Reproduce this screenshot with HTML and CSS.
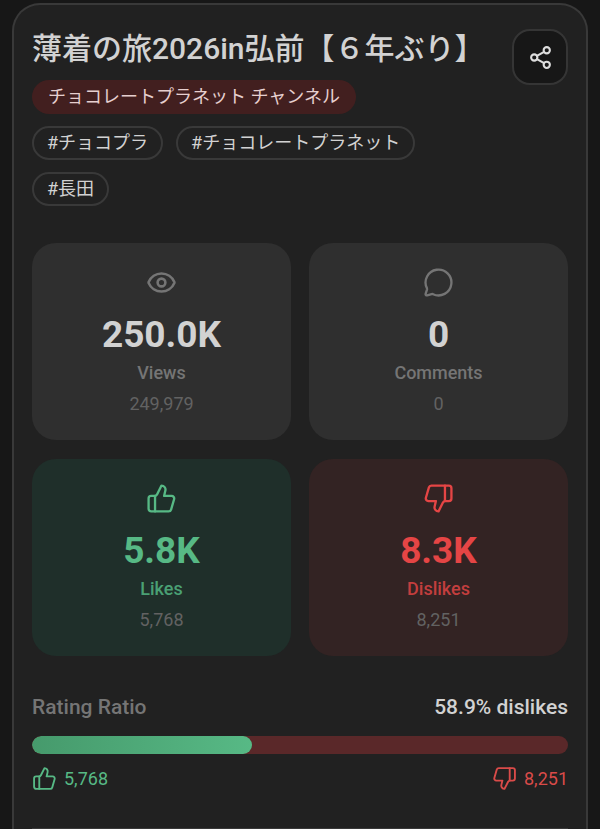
FILE: index.html
```html
<!DOCTYPE html>
<html lang="ja">
<head>
    <meta charset="UTF-8">
    <meta name="viewport" content="width=device-width, initial-scale=1.0">
    <title>薄着の旅2026in弘前【６年ぶり】</title>
    <link rel="stylesheet" href="styles.css">
</head>
<body>
    <!-- shared icons -->
    <svg class="sprite" aria-hidden="true">
        <symbol id="thumb-up" viewBox="0 0 24 24">
            <path d="M7 10v12"/>
            <path d="M15 5.88 14 10h5.83a2 2 0 0 1 1.92 2.56l-2.33 8A2 2 0 0 1 17.5 22H4a2 2 0 0 1-2-2v-8a2 2 0 0 1 2-2h2.76a2 2 0 0 0 1.79-1.11L12 2a3.13 3.13 0 0 1 3 3.88Z"/>
        </symbol>
        <symbol id="thumb-down" viewBox="0 0 24 24">
            <path d="M17 14V2"/>
            <path d="M9 18.12 10 14H4.17a2 2 0 0 1-1.92-2.56l2.33-8A2 2 0 0 1 6.5 2H20a2 2 0 0 1 2 2v8a2 2 0 0 1-2 2h-2.76a2 2 0 0 0-1.79 1.11L12 22a3.13 3.13 0 0 1-3-3.88Z"/>
        </symbol>
    </svg>

    <main class="card">
        <header class="header">
            <div class="info">
                <h1 class="title">薄着の旅2026in弘前【６年ぶり】</h1>
                <a class="channel" href="#">チョコレートプラネット チャンネル</a>
                <div class="tags">
                    <span class="tag">#チョコプラ</span>
                    <span class="tag">#チョコレートプラネット</span>
                    <span class="tag">#長田</span>
                </div>
            </div>
            <button class="share" type="button" aria-label="Share">
                <svg class="icon share-icon" viewBox="0 0 24 24">
                    <circle cx="18" cy="5" r="3"/>
                    <circle cx="6" cy="12" r="3"/>
                    <circle cx="18" cy="19" r="3"/>
                    <path d="M8.59 13.51l6.83 3.98M15.41 6.51l-6.82 3.98"/>
                </svg>
            </button>
        </header>

        <section class="stats">
            <div class="stat">
                <svg class="icon stat-icon eye" viewBox="0 0 24 24">
                    <path d="M2.062 12.348a1 1 0 0 1 0-.696 10.75 10.75 0 0 1 19.876 0 1 1 0 0 1 0 .696 10.75 10.75 0 0 1-19.876 0"/>
                    <circle cx="12" cy="12" r="3"/>
                </svg>
                <div class="value">250.0K</div>
                <div class="label">Views</div>
                <div class="exact">249,979</div>
            </div>
            <div class="stat">
                <svg class="icon stat-icon" viewBox="0 0 24 24">
                    <path d="M2.992 16.342a2 2 0 0 1 .094 1.167l-1.065 3.29a1 1 0 0 0 1.236 1.168l3.413-.998a2 2 0 0 1 1.099.092 10 10 0 1 0-4.777-4.719"/>
                </svg>
                <div class="value">0</div>
                <div class="label">Comments</div>
                <div class="exact">0</div>
            </div>
            <div class="stat likes">
                <svg class="icon stat-icon"><use href="#thumb-up"/></svg>
                <div class="value">5.8K</div>
                <div class="label">Likes</div>
                <div class="exact">5,768</div>
            </div>
            <div class="stat dislikes">
                <svg class="icon stat-icon"><use href="#thumb-down"/></svg>
                <div class="value">8.3K</div>
                <div class="label">Dislikes</div>
                <div class="exact">8,251</div>
            </div>
        </section>

        <section class="rating">
            <div class="row rating-head">
                <span class="rating-title">Rating Ratio</span>
                <span>58.9% dislikes</span>
            </div>
            <div class="bar">
                <div class="fill" style="width: 41.1%"></div>
            </div>
            <div class="row">
                <span class="count up"><svg class="icon count-icon"><use href="#thumb-up"/></svg>5,768</span>
                <span class="count down"><svg class="icon count-icon"><use href="#thumb-down"/></svg>8,251</span>
            </div>
        </section>
        <hr class="divider">
    </main>
</body>
</html>
```
FILE: styles.css
```css
*{
    margin: 0;
    padding: 0;
    box-sizing: border-box;
}
body{
    background: #171717;
    color: #d2d2d2;
    font-family: Roboto, "Noto Sans CJK JP", sans-serif;
    padding: 3px 12px 0;
}
.sprite{
    display: none;
}
.icon{
    display: block;
    fill: none;
    stroke: currentColor;
    stroke-width: 1.8;
    stroke-linecap: round;
    stroke-linejoin: round;
}
.card{
    min-height: calc(100vh - 3px);
    background: #212121;
    border: 2px solid #393939;
    border-bottom: none;
    border-radius: 28px 28px 0 0;
    padding: 24px 18px 0;
}

/* title, channel and tags */
.header{
    display: flex;
    justify-content: space-between;
    align-items: flex-start;
    gap: 16px;
    margin-bottom: 37px;
}
.title{
    font-size: 30px;
    line-height: 39px;
    font-weight: 500;
    margin-bottom: 12px;
}
.channel{
    display: table;
    background: #421f1f;
    color: #e6cfcf;
    border-radius: 17px;
    padding: 0 16px;
    font-size: 18px;
    line-height: 34px;
    text-decoration: none;
    margin-bottom: 12px;
}
.tags{
    display: flex;
    flex-wrap: wrap;
    gap: 12px 13px;
}
.tag{
    border: 2px solid #393939;
    border-radius: 17px;
    padding: 0 13px;
    font-size: 18px;
    line-height: 30px;
}
.share{
    flex: none;
    display: flex;
    align-items: center;
    justify-content: center;
    width: 56px;
    height: 56px;
    background: #171717;
    border: 2px solid #353535;
    border-radius: 18px;
    color: #dedede;
}
.share-icon{
    width: 25px;
    height: 25px;
    stroke-width: 2;
}

/* numbers */
.stats{
    display: grid;
    grid-template-columns: 1fr 1fr;
    gap: 19px 18px;
    margin-bottom: 39px;
}
.stat{
    background: #2f2f2f;
    border-radius: 24px;
    padding: 24px 16px;
    text-align: center;
}
.stat-icon{
    width: 31px;
    height: 31px;
    margin: 0 auto 15px;
    color: #757575;
}
.eye{
    stroke-width: 2;
}
.value{
    font-size: 37px;
    line-height: 44px;
    font-weight: 700;
    margin-bottom: 4px;
}
.label{
    color: #757575;
    font-size: 18px;
    line-height: 24px;
    font-weight: 500;
    margin-bottom: 6px;
}
.exact{
    color: #626262;
    font-size: 18px;
    line-height: 25px;
}
.likes{
    background: #1f2f2a;
}
.likes .stat-icon,
.likes .value{
    color: #57b985;
}
.likes .label{
    color: #4aa074;
}
.dislikes{
    background: #332323;
}
.dislikes .stat-icon,
.dislikes .value{
    color: #e54545;
}
.dislikes .label{
    color: #c33e3e;
}

/* like / dislike ratio */
.row{
    display: flex;
    justify-content: space-between;
    align-items: center;
}
.rating{
    margin-bottom: 37px;
}
.rating-head{
    font-size: 21px;
    line-height: 24px;
    font-weight: 500;
    margin-bottom: 17px;
}
.rating-title{
    color: #757575;
}
.bar{
    height: 18px;
    background: #5a2829;
    border-radius: 9px;
    overflow: hidden;
    margin-bottom: 12px;
}
.fill{
    height: 100%;
    border-radius: 9px;
    background: linear-gradient(90deg, #469a6c, #57b985);
}
.count{
    display: flex;
    align-items: center;
    gap: 7px;
    font-size: 18px;
    line-height: 24px;
}
.count-icon{
    width: 25px;
    height: 25px;
}
.up{
    color: #57b985;
}
.down{
    color: #d94b49;
}
.divider{
    border: none;
    border-top: 1px solid #393939;
}
```
